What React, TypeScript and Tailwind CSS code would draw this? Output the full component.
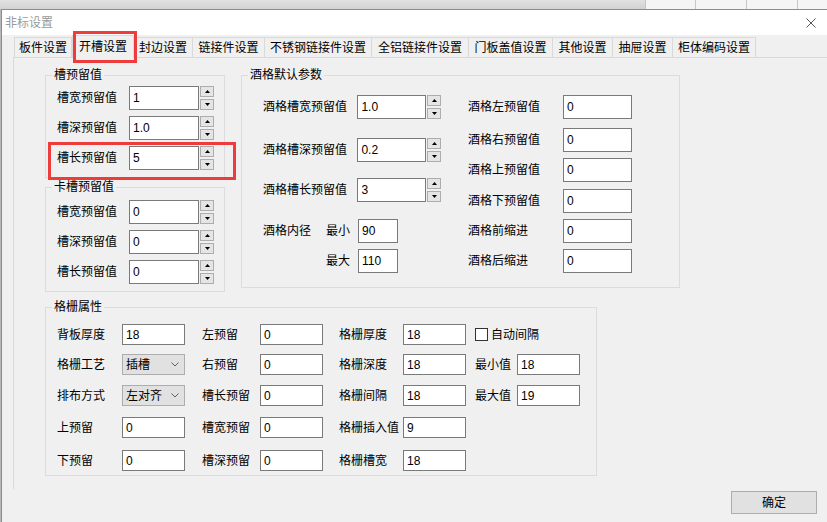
import React from 'react';

const Edit = ({ value, className = '' }: { value: string; className?: string }) => (
  <div className={`bg-white border border-[#7a7a7a] flex items-center px-[3px] leading-[16px] ${className}`}>
    {value}
  </div>
);

const Spin = () => (
  <div className="flex flex-col justify-between h-[24px] ml-px">
    <div className="w-[14px] h-[11px] bg-[#e5e5e5] border border-[#adadad] flex items-center justify-center">
      <svg width="5" height="3" viewBox="0 0 5 3"><path d="M2.5 0L5 3H0Z" fill="#000" /></svg>
    </div>
    <div className="w-[14px] h-[11px] bg-[#e5e5e5] border border-[#adadad] flex items-center justify-center">
      <svg width="5" height="3" viewBox="0 0 5 3"><path d="M0 0H5L2.5 3Z" fill="#000" /></svg>
    </div>
  </div>
);

const Group = ({ title, className = '', children }: { title: string; className?: string; children: React.ReactNode }) => (
  <fieldset className={`border border-[#dcdcdc] ${className}`}>
    <legend className="ml-[6px] px-[2px] leading-[16px]">{title}</legend>
    {children}
  </fieldset>
);

const SpinRow = ({ label, value }: { label: string; value: string }) => (
  <div className="flex items-center">
    <span className="w-[72px]">{label}</span>
    <Edit value={value} className="w-[70px] h-[24px] !items-start pt-[3px]" />
    <Spin />
  </div>
);

const Combo = ({ value }: { value: string }) => (
  <div className="w-[63px] h-[21px] bg-[#e1e1e1] border border-[#adadad] flex items-center justify-between pl-[3px] pr-[5px]">
    <span>{value}</span>
    <svg width="8" height="5" viewBox="0 0 8 5"><path d="M0.5 0.5L4 4L7.5 0.5" fill="none" stroke="#606060" /></svg>
  </div>
);

const tabs = [
  { name: '板件设置', w: 'w-[58px]' },
  { name: '开槽设置', w: 'w-[62px]', active: true },
  { name: '封边设置', w: 'w-[59px]' },
  { name: '链接件设置', w: 'w-[72px]' },
  { name: '不锈钢链接件设置', w: 'w-[107px]' },
  { name: '全铝链接件设置', w: 'w-[97px]' },
  { name: '门板盖值设置', w: 'w-[84px]' },
  { name: '其他设置', w: 'w-[60px]' },
  { name: '抽屉设置', w: 'w-[60px]' },
  { name: '柜体编码设置', w: 'w-[83px]' },
];

const gridRows = [
  { l1: '背板厚度', v1: '18', l2: '左预留', v2: '0', l3: '格栅厚度', v3: '18', mt: '' },
  { l1: '格栅工艺', combo: '插槽', l2: '右预留', v2: '0', l3: '格栅深度', v3: '18', l4: '最小值', v4: '18', mt: 'mt-[9px]' },
  { l1: '排布方式', combo: '左对齐', l2: '槽长预留', v2: '0', l3: '格栅间隔', v3: '18', l4: '最大值', v4: '19', mt: 'mt-[10px]' },
  { l1: '上预留', v1: '0', l2: '槽宽预留', v2: '0', l3: '格栅插入值', v3: '9', mt: 'mt-[11px]' },
  { l1: '下预留', v1: '0', l2: '槽深预留', v2: '0', l3: '格栅槽宽', v3: '18', mt: 'mt-[12px]' },
];

export default function App() {
  return (
    <div className="relative w-[827px] h-[522px] overflow-hidden bg-[#e4e4e4] flex flex-col font-['Liberation_Sans','Noto_Sans_CJK_SC',sans-serif] text-[12px] text-black">
      {/* desktop behind the dialog */}
      <div className="h-[9px] shrink-0 flex">
        <div className="flex-1 bg-gradient-to-b from-[#e2e2e2] to-[#d2d2d2]" />
        <div className="w-[50px] bg-[#f5f5f5] border-l border-[#c6c6c6]" />
        <div className="w-[51px] bg-[#f5f5f5] border-l border-[#c6c6c6]" />
        <div className="w-[51px] bg-[#f5f5f5] border-l border-[#c6c6c6]" />
        <div className="w-[30px] bg-[#f5f5f5] border-l border-[#c6c6c6]" />
      </div>

      <div className="flex flex-1 min-h-0">
        <div className="w-px bg-[#b8b8b8]" />
        {/* dialog window */}
        <div className="flex-1 flex flex-col border-l border-t border-[#8c8c8c] bg-[#f0f0f0]">
          <div className="h-[25px] shrink-0 bg-white flex items-center justify-between pl-[3px] pr-[11px]">
            <span className="text-[#9a9a9a] leading-[16px]">非标设置</span>
            <svg width="10" height="10" viewBox="0 0 10 10">
              <path d="M0.5 0.5L9.5 9.5M9.5 0.5L0.5 9.5" stroke="#555" strokeWidth="1" />
            </svg>
          </div>

          {/* tab strip */}
          <div className="h-[22px] shrink-0 flex items-end pl-[12px]">
            {tabs.map((t, i) =>
              t.active ? (
                <div
                  key={t.name}
                  className={`${t.w} h-[23px] -mb-px relative z-10 bg-[#f0f0f0] border-t border-l border-r border-[#d9d9d9] flex items-center justify-center leading-[16px]`}
                >
                  {t.name}
                </div>
              ) : (
                <div
                  key={t.name}
                  className={`${t.w} h-[20px] bg-[#f0f0f0] border-t border-r border-[#d9d9d9] flex items-center justify-center leading-[16px] ${i === 0 ? 'border-l' : ''}`}
                >
                  {t.name}
                </div>
              )
            )}
          </div>

          {/* tab page */}
          <div className="h-[432px] shrink-0 ml-[11px] border-l border-t border-[#d9d9d9] pl-[31px] pt-[9px] flex flex-col">
            <div className="flex items-start">
              <div className="w-[180px] flex flex-col">
                <Group title="槽预留值" className="w-[180px]">
                  <div className="flex flex-col gap-[6px] pl-[11px] pt-[3px] pb-[7px]">
                    <SpinRow label="槽宽预留值" value="1" />
                    <SpinRow label="槽深预留值" value="1.0" />
                    <SpinRow label="槽长预留值" value="5" />
                  </div>
                </Group>
                <Group title="卡槽预留值" className="w-[180px] mt-px">
                  <div className="flex flex-col gap-[6px] pl-[11px] pt-[5px] pb-[7px]">
                    <SpinRow label="槽宽预留值" value="0" />
                    <SpinRow label="槽深预留值" value="0" />
                    <SpinRow label="槽长预留值" value="0" />
                  </div>
                </Group>
              </div>

              <Group title="酒格默认参数" className="w-[439px] h-[221px] ml-[16px]">
                <div className="flex pl-[21px] pt-[12px]">
                  <div className="w-[178px] flex flex-col">
                    <div className="flex items-center">
                      <span className="w-[95px]">酒格槽宽预留值</span>
                      <Edit value="1.0" className="w-[69px] h-[24px]" />
                      <Spin />
                    </div>
                    <div className="flex items-center mt-[19px]">
                      <span className="w-[95px]">酒格槽深预留值</span>
                      <Edit value="0.2" className="w-[69px] h-[24px]" />
                      <Spin />
                    </div>
                    <div className="flex items-center mt-[16px]">
                      <span className="w-[95px]">酒格槽长预留值</span>
                      <Edit value="3" className="w-[69px] h-[24px]" />
                      <Spin />
                    </div>
                    <div className="flex items-center mt-[17px]">
                      <span className="w-[63px]">酒格内径</span>
                      <span className="w-[32px]">最小</span>
                      <Edit value="90" className="w-[40px] h-[24px]" />
                    </div>
                    <div className="flex items-center mt-[6px]">
                      <span className="w-[63px]" />
                      <span className="w-[32px]">最大</span>
                      <Edit value="110" className="w-[40px] h-[24px]" />
                    </div>
                  </div>

                  <div className="ml-[27px] flex flex-col">
                    {[
                      ['酒格左预留值', ''],
                      ['酒格右预留值', 'mt-[9px]'],
                      ['酒格上预留值', 'mt-[6px]'],
                      ['酒格下预留值', 'mt-[7px]'],
                      ['酒格前缩进', 'mt-[6px]'],
                      ['酒格后缩进', 'mt-[6px]'],
                    ].map(([label, mt]) => (
                      <div key={label} className={`flex items-center ${mt}`}>
                        <span className="w-[95px]">{label}</span>
                        <Edit value="0" className="w-[69px] h-[24px]" />
                      </div>
                    ))}
                  </div>
                </div>
              </Group>
            </div>

            <Group title="格栅属性" className="w-[552px] mt-[7px]">
              <div className="flex flex-col pl-[11px] pt-[9px] pb-[4px]">
                {gridRows.map((r) => (
                  <div key={r.l1} className={`flex items-center h-[21px] ${r.mt}`}>
                    <span className="w-[65px]">{r.l1}</span>
                    {r.combo ? <Combo value={r.combo} /> : <Edit value={r.v1 ?? ''} className="w-[63px] h-[21px]" />}
                    <span className="w-[58px] ml-[17px]">{r.l2}</span>
                    <Edit value={r.v2} className="w-[63px] h-[21px]" />
                    <span className="w-[64px] ml-[16px]">{r.l3}</span>
                    <Edit value={r.v3} className="w-[63px] h-[21px]" />
                    {r.l1 === '背板厚度' && (
                      <div className="ml-[9px] flex items-center">
                        <div className="w-[13px] h-[13px] bg-white border border-[#333]" />
                        <span className="ml-[3px]">自动间隔</span>
                      </div>
                    )}
                    {r.l4 && (
                      <div className="ml-[9px] flex items-center">
                        <span className="w-[42px]">{r.l4}</span>
                        <Edit value={r.v4 ?? ''} className="w-[63px] h-[21px]" />
                      </div>
                    )}
                  </div>
                ))}
              </div>
            </Group>
          </div>

          <div className="flex justify-end pr-[10px] mt-[2px]">
            <button className="w-[86px] h-[23px] bg-[#e1e1e1] border border-[#adadad] flex items-center justify-center leading-[16px]">
              确定
            </button>
          </div>
        </div>
      </div>

      {/* red annotation boxes */}
      <div className="absolute left-[73px] top-[31px] w-[64px] h-[32px] border-[3px] border-[#ee3b3b] z-20" />
      <div className="absolute left-[48px] top-[142px] w-[188px] h-[38px] border-[3px] border-[#ee3b3b] z-20" />
    </div>
  );
}
